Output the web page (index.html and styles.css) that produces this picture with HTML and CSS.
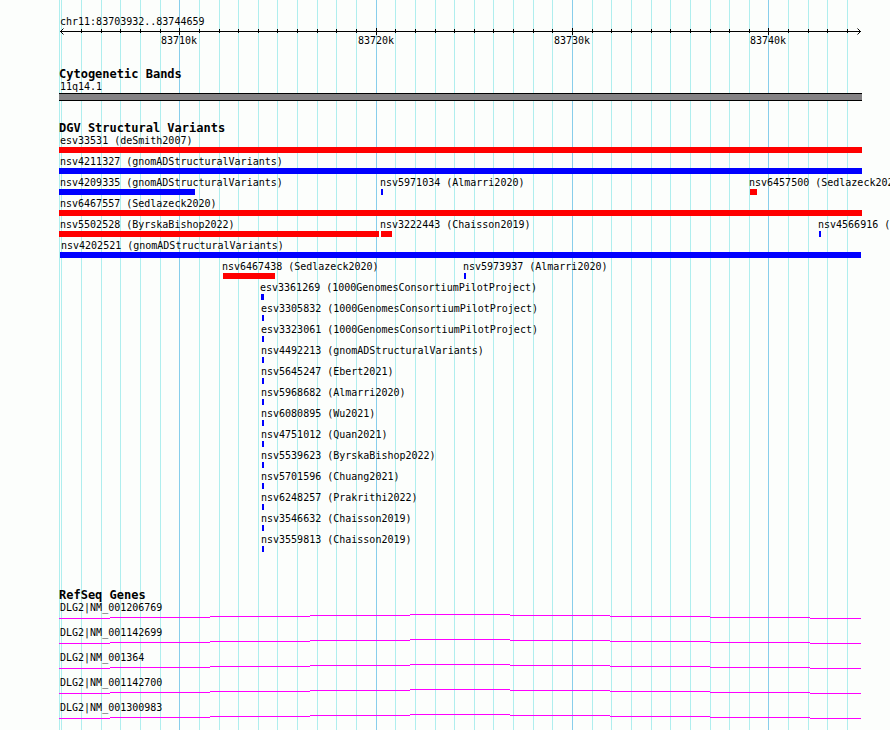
FILE: index.html
```html
<!DOCTYPE html>
<html lang="en">
<head>
<meta charset="utf-8">
<title>chr11:83703932..83744659</title>
<link rel="stylesheet" href="styles.css">
</head>
<body>
<main class="panel">
  <div class="grid" id="grid" aria-hidden="true"></div>

  <header class="ruler">
    <div class="label clipped">chr11:83703932..83744659</div>
    <div class="axis" id="axis">
      <svg class="arrow" viewBox="0 0 5 7"><path d="M3.5 0.5 L0.5 3.5 L3.5 6.5"/></svg>
      <svg class="arrow" viewBox="0 0 5 7"><path d="M1.5 0.5 L4.5 3.5 L1.5 6.5"/></svg>
    </div>
    <div class="lane scale">
      <span class="mark" style="--x:120">83710k</span>
      <span class="mark" style="--x:317">83720k</span>
      <span class="mark" style="--x:513">83730k</span>
      <span class="mark" style="--x:709">83740k</span>
    </div>
  </header>

  <section class="track">
    <h2>Cytogenetic Bands</h2>
    <div class="label clipped">11q14.1</div>
    <div class="band"></div>
  </section>

  <section class="track variants">
    <h2>DGV Structural Variants</h2>
    <div class="lane"><div class="feature loss clipped" style="--x:0;--w:803">esv33531 (deSmith2007)</div></div>
    <div class="lane"><div class="feature gain clipped" style="--x:0;--w:803">nsv4211327 (gnomADStructuralVariants)</div></div>
    <div class="lane">
      <div class="feature gain clipped" style="--x:0;--w:136">nsv4209335 (gnomADStructuralVariants)</div>
      <div class="feature gain" style="--x:322;--w:2">nsv5971034 (Almarri2020)</div>
      <div class="feature loss" style="--x:691;--w:7">nsv6457500 (Sedlazeck2020)</div>
    </div>
    <div class="lane"><div class="feature loss clipped" style="--x:0;--w:803">nsv6467557 (Sedlazeck2020)</div></div>
    <div class="lane">
      <div class="feature loss clipped" style="--x:0;--w:320">nsv5502528 (ByrskaBishop2022)</div>
      <div class="feature loss" style="--x:322;--w:11">nsv3222443 (Chaisson2019)</div>
      <div class="feature gain" style="--x:760;--w:2">nsv4566916 (</div>
    </div>
    <div class="lane"><div class="feature gain clipped" style="--x:1;--w:801">nsv4202521 (gnomADStructuralVariants)</div></div>
    <div class="lane">
      <div class="feature loss" style="--x:164;--w:52">nsv6467438 (Sedlazeck2020)</div>
      <div class="feature gain" style="--x:405;--w:2">nsv5973937 (Almarri2020)</div>
    </div>
    <div class="lane"><div class="feature gain" style="--x:202;--w:3">esv3361269 (1000GenomesConsortiumPilotProject)</div></div>
    <div class="lane"><div class="feature gain" style="--x:203;--w:2">esv3305832 (1000GenomesConsortiumPilotProject)</div></div>
    <div class="lane"><div class="feature gain" style="--x:203;--w:2">esv3323061 (1000GenomesConsortiumPilotProject)</div></div>
    <div class="lane"><div class="feature gain" style="--x:203;--w:2">nsv4492213 (gnomADStructuralVariants)</div></div>
    <div class="lane"><div class="feature gain" style="--x:203;--w:2">nsv5645247 (Ebert2021)</div></div>
    <div class="lane"><div class="feature gain" style="--x:203;--w:2">nsv5968682 (Almarri2020)</div></div>
    <div class="lane"><div class="feature gain" style="--x:203;--w:2">nsv6080895 (Wu2021)</div></div>
    <div class="lane"><div class="feature gain" style="--x:203;--w:2">nsv4751012 (Quan2021)</div></div>
    <div class="lane"><div class="feature gain" style="--x:203;--w:2">nsv5539623 (ByrskaBishop2022)</div></div>
    <div class="lane"><div class="feature gain" style="--x:203;--w:2">nsv5701596 (Chuang2021)</div></div>
    <div class="lane"><div class="feature gain" style="--x:203;--w:2">nsv6248257 (Prakrithi2022)</div></div>
    <div class="lane"><div class="feature gain" style="--x:203;--w:2">nsv3546632 (Chaisson2019)</div></div>
    <div class="lane"><div class="feature gain" style="--x:203;--w:2">nsv3559813 (Chaisson2019)</div></div>
  </section>

  <section class="track genes">
    <h2>RefSeq Genes</h2>
    <svg class="defs" aria-hidden="true">
      <symbol id="intron" viewBox="0 0 803 5" preserveAspectRatio="none">
        <path d="M0 4h51v1H0zM51 3h100v1H51zM151 2h100v1H151zM251 1h100v1H251zM351 0h100v1H351zM451 1h100v1H451zM551 2h100v1H551zM651 3h100v1H651zM751 4h51v1H751z"/>
      </symbol>
    </svg>
    <div class="gene"><div class="label clipped">DLG2|NM_001206769</div><svg class="intron"><use href="#intron"/></svg></div>
    <div class="gene"><div class="label clipped">DLG2|NM_001142699</div><svg class="intron"><use href="#intron"/></svg></div>
    <div class="gene"><div class="label clipped">DLG2|NM_001364</div><svg class="intron"><use href="#intron"/></svg></div>
    <div class="gene"><div class="label clipped">DLG2|NM_001142700</div><svg class="intron"><use href="#intron"/></svg></div>
    <div class="gene"><div class="label clipped">DLG2|NM_001300983</div><svg class="intron"><use href="#intron"/></svg></div>
  </section>
</main>
<script src="grid.js"></script>
</body>
</html>
```
FILE: styles.css
```css
* { box-sizing: border-box; }

body {
  margin: 0;
  background: #fcfefc;
  color: #000;
  font: 10px/13px "DejaVu Sans Mono", "Liberation Mono", monospace;
  overflow-x: hidden;
}

/* Horizontal positions are given in units of 1/803 of the panel width. */
.panel {
  position: relative;
  min-height: 100vh;
  margin: 0 28px 0 59px;
  padding-top: 15px;
}

.grid {
  position: absolute;
  inset: 0;
  z-index: -1;
}

.line,
.tick {
  position: absolute;
  left: calc(var(--x) / 803 * 100%);
  width: 1px;
}

.line { top: 0; bottom: 0; background: #afeeee; }
.line.major { background: #87ceeb; }

.axis {
  position: relative;
  display: flex;
  justify-content: space-between;
  height: 7px;
  padding: 0 1px;
  background: linear-gradient(#000, #000) 0 3px / 100% 1px no-repeat content-box;
}

.arrow { width: 5px; height: 7px; fill: none; stroke: #000; }
.tick { top: 1px; height: 4px; background: #000; }
.tick.major { top: 0; height: 7px; }

.label,
.feature { white-space: nowrap; }
.feature { text-indent: -1px; }
.clipped { text-indent: 1px; }

.lane { display: grid; grid-template-columns: 100%; }

.mark {
  grid-area: 1 / 1;
  justify-self: start;
  margin-left: calc(var(--x) / 803 * 100%);
  transform: translateX(-50%);
}

.scale { margin-top: -1px; }

h2 {
  margin: 0;
  padding-top: 2px;
  font-size: 12px;
  line-height: 11px;
  font-weight: bold;
}

.track { margin-top: 20px; }
.genes { margin-top: 34px; }

.band {
  height: 8px;
  border: solid #000;
  border-width: 1px 0;
  background: #848284;
}

.variants .lane { padding-bottom: 2px; }

.feature {
  grid-area: 1 / 1;
  width: calc(var(--w) / 803 * 100%);
  margin-left: calc(var(--x) / 803 * 100%);
}

.feature::after {
  content: "";
  display: block;
  height: 6px;
  background: currentColor;
}

.loss::after { background: #f00; }
.gain::after { background: #00f; }

.defs { display: none; }
.gene { padding-bottom: 7px; }
.intron { display: block; width: 100%; height: 5px; fill: #f0f; }
```
FILE: grid.js
```js
// One line per kilobase; every tenth one is major.
const lines = [2, 22, 42, 61, 81, 101, 120, 140, 160, 179, 199, 218, 238, 258,
  277, 297, 317, 336, 356, 376, 395, 415, 434, 454, 474, 493, 513, 533, 552,
  572, 592, 611, 631, 651, 670, 690, 709, 729, 749, 768, 788];
const majors = [120, 317, 513, 709];

function add(parent, kind, x) {
  const el = document.createElement("span");
  el.className = majors.includes(x) ? kind + " major" : kind;
  el.style.setProperty("--x", x);
  parent.append(el);
}

const grid = document.getElementById("grid");
const axis = document.getElementById("axis");
add(grid, "line", 0);
for (const x of lines) {
  add(grid, "line", x);
  if (x > 2) add(axis, "tick", x);
}
```
